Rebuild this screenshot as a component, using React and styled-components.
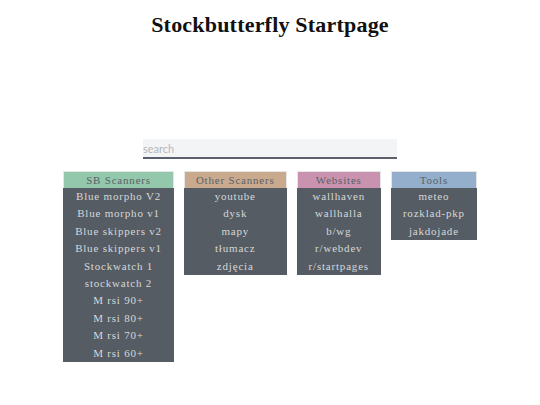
import styled, { createGlobalStyle } from "styled-components";

const GlobalStyle = createGlobalStyle`
    body {
        margin: 0;
        background: #ffffff;
        font-family: "Liberation Serif", serif;
    }
`

const Page = styled.div`
    display: flex;
    flex-direction: column;
    align-items: center;
`

const Title = styled.h1`
    margin: 12px 0 0;
    font-size: 22px;
    font-weight: bold;
    letter-spacing: 0.2px;
    color: #111;
`

const Search = styled.input`
    margin-top: 101px;
    width: 254px;
    height: 20px;
    box-sizing: border-box;
    padding: 0;
    border: none;
    border-bottom: 2px solid #5b5f6d;
    background: #f3f4f6;
    font-family: Lato, sans-serif;
    font-size: 11px;
    color: #555;
    outline: none;
    &::placeholder {
        color: #b5b7ba;
    }
`

const Columns = styled.div`
    display: flex;
    align-items: flex-start;
    gap: 10px;
    margin-top: 12px;
`

const Column = styled.div`
    display: flex;
    flex-direction: column;
    background: #555c63;
`

const Heading = styled.div`
    background: ${({ color }) => color};
    color: #5a6166;
    font-size: 11px;
    letter-spacing: 0.8px;
    text-align: center;
    height: 16px;
    line-height: 16px;
    padding: 0 11px;
    border: 1px solid #e6e6e6;
    border-bottom: none;
`

const Link = styled.a`
    display: block;
    height: 17.4px;
    line-height: 17.4px;
    padding: 0 12px;
    text-align: center;
    font-size: 11px;
    letter-spacing: 0.8px;
    color: #d6d8da;
    text-decoration: none;
    white-space: nowrap;
`

const groups = [
    {
        title: "SB Scanners",
        color: "#93c8ad",
        links: ["Blue morpho V2", "Blue morpho v1", "Blue skippers v2", "Blue skippers v1", "Stockwatch 1", "stockwatch 2", "M rsi 90+", "M rsi 80+", "M rsi 70+", "M rsi 60+"],
    },
    {
        title: "Other Scanners",
        color: "#c9aa8f",
        links: ["youtube", "dysk", "mapy", "tłumacz", "zdjęcia"],
    },
    {
        title: "Websites",
        color: "#c993af",
        links: ["wallhaven", "wallhalla", "b/wg", "r/webdev", "r/startpages"],
    },
    {
        title: "Tools",
        color: "#94afcb",
        links: ["meteo", "rozklad-pkp", "jakdojade"],
    },
];

export default function App() {
    return (
        <Page>
            <GlobalStyle />
            <Title>Stockbutterfly Startpage</Title>
            <Search placeholder="search" />
            <Columns>
                {groups.map((g) => (
                    <Column key={g.title}>
                        <Heading color={g.color}>{g.title}</Heading>
                        {g.links.map((l) => (
                            <Link key={l} href="#">{l}</Link>
                        ))}
                    </Column>
                ))}
            </Columns>
        </Page>
    );
}
